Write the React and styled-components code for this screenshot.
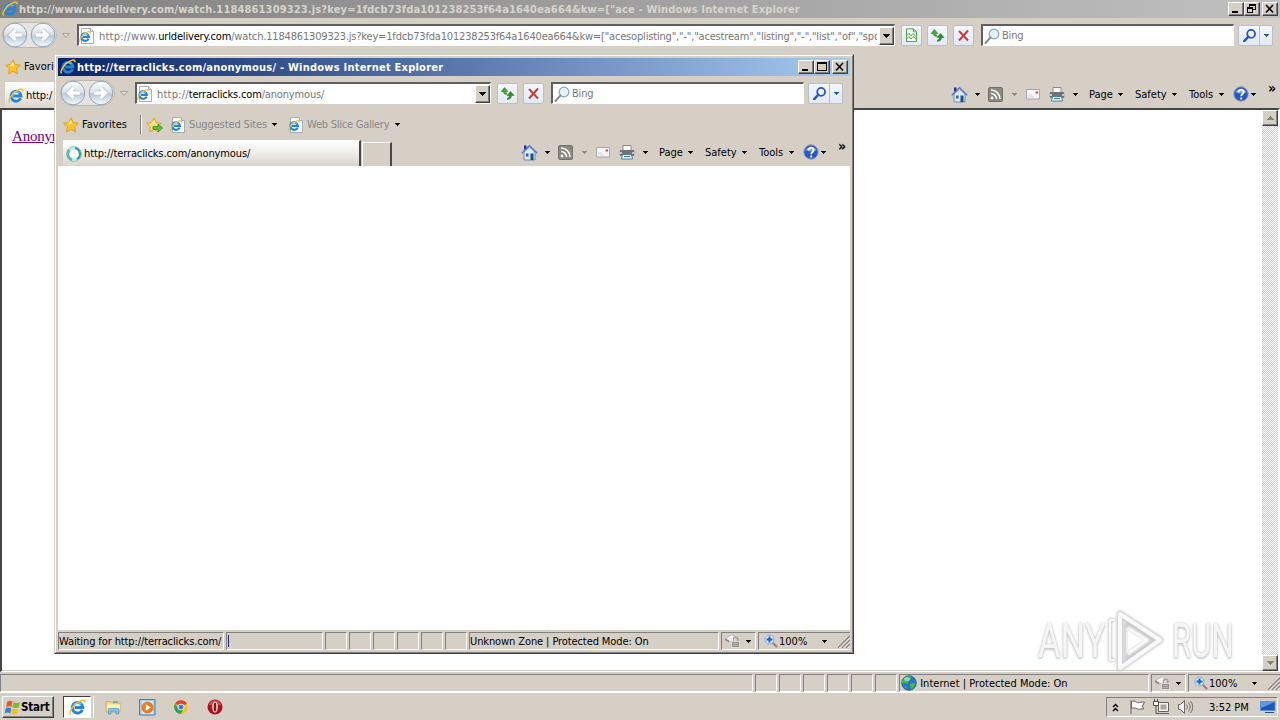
import React from "react";
import styled, { createGlobalStyle, css } from "styled-components";

const FACE = "#d5cfc6";
const ui = `"DejaVu Sans Condensed", "DejaVu Sans", sans-serif`;

const Global = createGlobalStyle`
  * { box-sizing: border-box; }
  body { margin: 0; overflow: hidden; }
  svg { display: block; flex: none; }
`;

const Desktop = styled.div`
  position: relative;
  width: 1280px;
  height: 720px;
  overflow: hidden;
  display: flex;
  flex-direction: column;
  background: ${FACE};
  font: 11px/14px ${ui};
  color: #000;
`;
const Label = styled.span`
  white-space: pre;
  padding-top: 1px;
  letter-spacing: ${(p) => p.$ls || 0}px;
  color: ${(p) => p.$color || "inherit"};
`;

/* ---------- windows ---------- */
const MainWindow = styled.section`
  height: 692px;
  display: flex;
  flex-direction: column;
`;
const PopupWindow = styled.section`
  position: absolute;
  left: 54px;
  top: 54px;
  width: 800px;
  height: 600px;
  background: ${FACE};
  border: 1px solid;
  border-color: ${FACE} #404040 #404040 ${FACE};
`;
const PopupInner = styled.div`
  height: 100%;
  padding: 2px 2px 0;
  border: 1px solid;
  border-color: #fff #808080 #808080 #fff;
  display: flex;
  flex-direction: column;
`;
const TitleBar = styled.header`
  height: 18px;
  flex: none;
  display: flex;
  align-items: center;
  padding: 0 2px;
  font-weight: bold;
  color: ${(p) => (p.$active ? "#fff" : "#d8d4cc")};
  background: ${(p) =>
    p.$active
      ? "linear-gradient(90deg,#0a246a,#a6caf0)"
      : "linear-gradient(90deg,#808080,#c0c0c0)"};
`;
const TitleText = styled(Label)`
  flex: 1;
  padding-left: 1px;
`;
const Caption = styled.button`
  width: 16px;
  height: 14px;
  padding: 0;
  margin-left: ${(p) => (p.$gap ? 2 : 0)}px;
  background: ${FACE};
  border: 1px solid;
  border-color: #fff #404040 #404040 #fff;
  box-shadow: inset -1px -1px #808080;
`;

const AddressRow = styled.div`
  height: 36px;
  flex: none;
  display: flex;
  align-items: center;
  padding: 0 7px 2px 2px;
`;
const NavWell = styled.div`
  display: flex;
  width: 57px;
  margin-right: 3px;
`;
const Field = styled.div`
  height: 22px;
  display: flex;
  align-items: center;
  background: #fff;
  border: 2px solid;
  border-color: #606060 #fff #fff #606060;
  border-width: 2px 1px 1px 2px;
  color: #777;
  overflow: hidden;
`;
const AddressField = styled(Field)`
  flex: 1;
  min-width: 0;
  margin-left: 8px;
`;
const UrlText = styled(Label)`
  flex: 1;
  min-width: 0;
  overflow: hidden;
  margin: 0 2px 0 4px;
  padding-top: 2px;
  b { font-weight: normal; color: #000; }
`;
const Scheme = styled.span`
  letter-spacing: ${(p) => p.$ls}px;
`;
const DropButton = styled.button`
  width: 15px;
  height: 18px;
  padding: 0;
  display: grid;
  place-items: center;
  background: ${FACE};
  border: 1px solid;
  border-color: #fff #404040 #404040 #fff;
  box-shadow: inset -1px -1px #808080;
`;
const SearchField = styled(Field)`
  width: 253px;
  margin-left: 7px;
  padding-left: 1px;
  gap: 2px;
`;
const ToolButton = styled.button`
  width: ${(p) => p.$w || 21}px;
  height: 21px;
  padding: 0;
  margin-left: ${(p) => p.$ml ?? 5}px;
  display: flex;
  align-items: center;
  justify-content: space-evenly;
  background: linear-gradient(#f4f7fb, #e3e9f2);
  border: 1px solid #b9bfc9;
  border-radius: 2px;
`;
const Divider = styled.i`
  width: 1px;
  height: 19px;
  background: #b9bfc9;
`;

const Row = styled.div`
  display: flex;
  flex: none;
  align-items: center;
`;
const FavoritesRow = styled(Row)`
  height: 24px;
  padding-left: 5px;
  padding-top: 1px;
`;
const TabRow = styled(Row)`
  height: 30px;
  padding-left: 5px;
`;
const Slot = styled.div`
  width: ${(p) => p.$w}px;
  flex: none;
  display: flex;
  align-items: center;
`;
const Separator = styled.i`
  width: 2px;
  height: 19px;
  margin-right: 4px;
  border-left: 1px solid #808080;
  border-right: 1px solid #fff;
`;
const Tab = styled.div`
  align-self: flex-end;
  width: 298px;
  height: 26px;
  display: flex;
  align-items: center;
  gap: 2px;
  padding-left: 3px;
  background: linear-gradient(#fff, #f3f1ee 40%, #d9d4cc);
  border-top: 1px solid #fff;
  border-right: 2px solid #4a4744;
`;
const NewTab = styled.div`
  align-self: flex-end;
  width: 30px;
  height: 24px;
  margin-left: 1px;
  border-top: 1px solid #fff;
  border-left: 1px solid #fff;
  border-right: 2px solid #4a4744;
`;
const CommandBar = styled(Row)`
  margin-left: auto;
  padding-top: 2px;
`;
const Overflow = styled.span`
  width: 12px;
  font: bold 14px/12px ${ui};
  padding-bottom: 12px;
`;

/* ---------- content ---------- */
const MainContent = styled.main`
  flex: 1;
  display: flex;
  background: #fff;
  border: 2px solid;
  border-color: #454545 #fff #fff #454545;
  border-width: 2px 2px 1px 2px;
  box-shadow: inset 0 -1px #d0ccc5;
`;
const Page = styled.div`
  flex: 1;
  padding: 16px 10px;
`;
const Link = styled.a`
  font: 15px/20px "Liberation Serif", serif;
  letter-spacing: -0.2px;
  color: #800080;
  text-decoration: underline;
`;
const PopupContent = styled.main`
  flex: 1;
  background: #fff;
`;
const ScrollBar = styled.div`
  width: 16px;
  display: flex;
  flex-direction: column;
  justify-content: space-between;
  background: repeating-conic-gradient(#d5cfc6 0 25%, #fff 0 50%) 0 0 / 2px 2px;
`;
const ScrollButton = styled(DropButton)`
  width: 16px;
  height: 16px;
`;

/* ---------- status bar ---------- */
const StatusBar = styled.footer`
  height: ${(p) => p.$h}px;
  flex: none;
  display: flex;
  align-items: flex-start;
  gap: 2px;
  padding-top: 2px;
`;
const Pane = styled.div`
  height: 18px;
  ${(p) => (p.$w ? css`width: ${p.$w}px; flex: none;` : css`flex: 1; min-width: 0;`)}
  display: flex;
  align-items: center;
  border: 1px solid;
  border-color: #808080 #fff #fff #808080;
  padding-left: ${(p) => p.$pl || 0}px;
`;
const ZoomPane = styled(Pane)`
  border-right: 0;
`;
const Progress = styled.i`
  width: 1px;
  height: 12px;
  background: #23238c;
`;

/* ---------- taskbar ---------- */
const TaskBar = styled.nav`
  height: 28px;
  display: flex;
  align-items: center;
  padding: 1px 2px 0;
  border-top: 1px solid #fff;
`;
const StartButton = styled.button`
  width: 52px;
  height: 22px;
  padding: 0 0 0 1px;
  display: flex;
  align-items: center;
  gap: 0;
  font: bold 11.5px/14px ${ui};
  letter-spacing: -0.2px;
  background: ${FACE};
  border: 1px solid;
  border-color: #fff #404040 #404040 #fff;
  box-shadow: inset -1px -1px #808080;
`;
const TaskActive = styled.div`
  width: 28px;
  height: 22px;
  margin-left: 9px;
  display: grid;
  place-items: center;
  background: #fff;
  border: 1px solid;
  border-color: #404040 #fff #fff #404040;
  box-shadow: 2px 0 ${FACE}, 3px 0 #fff;
`;
const Launch = styled.div`
  width: 34px;
  display: grid;
  place-items: center;
`;
const Launchers = styled(Row)`
  flex: 1;
  padding-left: 5px;
`;
const Tray = styled.div`
  width: 172px;
  height: 20px;
  display: flex;
  align-items: center;
  border: 1px solid;
  border-color: #808080 #fff #fff #808080;
  padding-left: 5px;
`;

/* ---------- watermark ---------- */
const Watermark = styled.div`
  position: absolute;
  left: 1038px;
  top: 607px;
  width: 196px;
  height: 68px;
  display: flex;
  align-items: center;
  justify-content: space-between;
`;
const MarkWord = styled.span`
  width: 62px;
  font: 48px/60px Roboto, sans-serif;
  color: #f6f6f6;
  text-shadow: 0 0 3px #c4c4c4, 0 2px 3px #ccc, 0 0 1px #ddd;
  transform: scaleX(${(p) => p.$sx});
  transform-origin: 0 50%;
`;

/* ---------- icons ---------- */
const Arrow = ({ color = "#000" }) => (
  <svg width="5" height="3" shapeRendering="crispEdges"><path d="M0 0h5L2.5 3z" fill={color} /></svg>
);
const WideArrow = ({ color = "#000", up }) => (
  <svg width="7" height="4" shapeRendering="crispEdges">
    <path d={up ? "M0 4h7L3.5 0z" : "M0 0h7L3.5 4z"} fill={color} />
  </svg>
);
const IeGlyph = () => (
  <>
    <path d="M12.6 10.2A5 5 0 1 1 13 8H5.2" fill="none" stroke="#2584da" strokeWidth="2.8" />
    <path d="M4.5 6A4.300 4.300 0 0 1 11.500 5" fill="none" stroke="#6accf7" strokeWidth="1.4" />
    <path d="M1.600 14.600C-.6 12 4.500 4.300 11 1.600c3-1.200 4.400-.4 3.800 1.600" fill="none" stroke="#efc131" strokeWidth="1.500" />
  </>
);
const IeIcon = ({ size = 16 }) => (
  <svg width={size} height={size} viewBox="0 0 16 16"><IeGlyph /></svg>
);
const IePage = () => (
  <svg width="16" height="16" viewBox="0 0 16 16">
    <path d="M2.500.5h9l3 3v12h-12z" fill="#fff" stroke="#a8aeb8" />
    <path d="M11.500.5v3h3" fill="#dde6f2" stroke="#a8aeb8" />
    <g transform="translate(0 2.800) scale(.76)"><IeGlyph /></g>
  </svg>
);
const NavArrows = () => (
  <svg width="68" height="28" viewBox="0 0 68 28">
    <defs>
      <linearGradient id="nav" x2="0" y2="1">
        <stop offset="0" stopColor="#fff" />
        <stop offset=".45" stopColor="#dbe2e9" />
        <stop offset=".55" stopColor="#bccbda" />
        <stop offset="1" stopColor="#f4fbff" />
      </linearGradient>
    </defs>
    <rect x=".5" y="1.5" width="54" height="25" rx="12.5" fill="#e6e4e2" stroke="#bcb8b2" />
    {[13, 41].map((cx) => (
      <g key={cx}>
        <circle cx={cx} cy="14" r="11.800" fill="url(#nav)" stroke="#98a2af" />
        {[["#a3b1c4", 4.6], ["#fff", 3.4]].map(([stroke, w]) => (
          <path
            key={stroke}
            d={cx === 13 ? "M20 14H8.500m5-5L8.500 14l5 5" : "M34 14h11.500m-5-5L45.500 14l-5 5"}
            fill="none" stroke={stroke} strokeWidth={w}
          />
        ))}
      </g>
    ))}
    <path d="M60.500 12.500h7l-3.500 4z" fill="#e4e1dc" stroke="#a5a19b" />
  </svg>
);
const Star = ({ add }) => (
  <svg width="17" height="16" viewBox="0 0 17 16">
    <path d="M8 .8l2.200 4.800 5.200.6-3.900 3.500 1.100 5.200L8 12.300l-4.600 2.600 1.100-5.200L.6 6.200l5.200-.6z" fill={add ? "#fbe37c" : "#fcc52c"} stroke="#e39c25" />
    <path d="M8 3l1.300 3.400-4.800.6z" fill="#fff3b0" />
    {add && <path d="M7 9.500h5V7l4.500 4-4.500 4v-2.500H7z" fill="#5fc23c" stroke="#2e8b21" strokeWidth=".8" />}
  </svg>
);
const Refresh = () => (
  <svg width="15" height="15" viewBox="0 0 15 15">
    <path d="M4.500 1.500L1 5.500h2.300c0 2 1.400 3 3.200 3V6.800C5.700 6.800 5.500 6.300 5.500 5.500H8z" fill="#3fa83a" stroke="#237f25" strokeWidth=".5" />
    <path d="M10.500 5.500L7 9.500h2.300c0 1.500-.5 2-1.800 2.500v1.500c2.800-.3 4-1.800 4-4H14z" fill="#2c8f2a" stroke="#1c7320" strokeWidth=".5" />
  </svg>
);
const Stop = () => (
  <svg width="13" height="13" viewBox="0 0 13 13">
    <path d="M2 2l9 9.500M11 1.500L2 11.500" stroke="#cf3a3f" strokeWidth="2" fill="none" />
  </svg>
);
const Compat = () => (
  <svg width="13" height="14" viewBox="0 0 13 14">
    <path d="M1.500.8h7l3 3v9.700h-10z" fill="#f6fff4" stroke="#52a64e" />
    <path d="M8.500.8v3h3M1.500 8l2.500-2.500L6 8l2-2.500 3 3M1.500 11l2.500-2.500L6 11l2-2.500 3 2.500" fill="none" stroke="#52a64e" />
  </svg>
);
const Glass = ({ dark }) => (
  <svg width={dark ? 13 : 16} height={dark ? 13 : 16} viewBox="0 0 16 16">
    <circle cx="10" cy="6" r="4.800" fill={dark ? "#f5f9ff" : "#e3f2fb"} stroke={dark ? "#1f57c8" : "#8aa3b8"} strokeWidth={dark ? 2.2 : 1.2} />
    <path d="M6.500 9.500L1.500 15" stroke={dark ? "#1f57c8" : "#8d8d93"} strokeWidth={dark ? 3 : 2} strokeLinecap="round" />
  </svg>
);
const Home = () => (
  <svg width="17" height="17" viewBox="0 0 17 17">
    <path d="M3 8v8h11V8L8.500 3z" fill="#d9e8f6" stroke="#5a78ab" strokeWidth=".8" />
    <path d="M3 1.500h2.500v4H3z" fill="#1d2d9a" />
    <path d="M.8 9.300L8.500 1.600l7.700 7.700" fill="none" stroke="#5d70bd" strokeWidth="1.300" />
    <path d="M9.500 9.500h3V16h-3z" fill="#1e4f80" /><path d="M5 9.500h2.500v3H5z" fill="#2c6591" />
  </svg>
);
const Rss = () => (
  <svg width="15" height="15" viewBox="0 0 15 15">
    <rect x=".5" y=".5" width="14" height="14" rx="1.500" fill="#8b8984" stroke="#74716d" />
    <circle cx="4" cy="11" r="1.400" fill="#fff" />
    <path d="M3 6.500a5.500 5.500 0 0 1 5.500 5.500M3 3a9 9 0 0 1 9 9" fill="none" stroke="#fff" strokeWidth="1.500" />
  </svg>
);
const Mail = () => (
  <svg width="14" height="11" viewBox="0 0 14 11">
    <path d="M.5.500h13v9.500H.500z" fill="#f7f5f7" stroke="#aaa5a8" />
    <path d="M2 6h4M2 8h6" stroke="#d5d2dc" /><path d="M9.500 2.500h2.500v2H9.500z" fill="#dc4a3d" />
  </svg>
);
const Printer = () => (
  <svg width="16" height="16" viewBox="0 0 16 16">
    <path d="M4 1.500h8V7H4z" fill="#fff" stroke="#8b8b8b" />
    <rect x=".8" y="6" width="14.400" height="6" rx="1" fill="#707278" />
    <path d="M1 8h2v2H1zM13 8h2v2h-2z" fill="#c5c8ce" />
    <path d="M3.500 10.500h9l1 4.500h-11z" fill="#f0f7fb" stroke="#557a92" /><path d="M5 12.500h6" stroke="#2d7ca8" />
  </svg>
);
const Help = () => (
  <svg width="16" height="16" viewBox="0 0 16 16">
    <circle cx="8" cy="8" r="7.200" fill="#2956c3" stroke="#8d9cc2" />
    <path d="M2.500 6a6 5 0 0 1 11 0q-5 3-11 0z" fill="#84a6ea" />
    <path d="M5.600 6.200c0-3.400 5-3.200 5 0C10.600 8 8.200 8 8.200 10.200M8.200 11.400v2" fill="none" stroke="#fff" strokeWidth="1.800" />
  </svg>
);
const Spinner = () => (
  <svg width="16" height="16" viewBox="0 0 16 16">
    <circle cx="8" cy="8" r="6" fill="#fff" stroke="#c4e9e4" strokeWidth="3" />
    <path d="M3.500 3.800A6 6 0 0 0 6 13.700" fill="none" stroke="#57bab4" strokeWidth="2.600" />
    <path d="M9 2.100A6 6 0 0 1 11 13.200" fill="none" stroke="#2a9f9c" strokeWidth="2" />
    <circle cx="8" cy="8" r="7.500" fill="none" stroke="#7fa9a8" strokeWidth=".6" />
  </svg>
);
const Privacy = () => (
  <svg width="17" height="16" viewBox="0 0 17 16">
    <path d="M1 6l7-4.500 4 3V9L4 8z" fill="#f2f2f2" stroke="#b5b2ae" strokeWidth=".8" />
    <path d="M1 6l4 2.500" stroke="#888" strokeWidth="1.500" />
    <path d="M9.500 9V6.500a2.200 2.200 0 0 1 4.400 0V9" fill="none" stroke="#a5a29e" strokeWidth="1.500" />
    <path d="M7.500 8.500h8v6h-8z" fill="#93918d" stroke="#fff" strokeWidth=".6" />
    <path d="M9 10.500h5M9 12.500h5" stroke="#ccc" strokeWidth=".7" />
  </svg>
);
const ZoomIcon = () => (
  <svg width="14" height="14" viewBox="0 0 14 14">
    <path d="M8.500 8.500l4 4" stroke="#9a8672" strokeWidth="2.200" strokeLinecap="round" />
    <circle cx="5.500" cy="5.500" r="4.500" fill="#d9ecfb" stroke="#87a9d1" />
    <path d="M5.500 2.500v6M2.500 5.500h6" stroke="#1862c4" strokeWidth="2" />
  </svg>
);
const Grip = () => (
  <svg width="12" height="14" viewBox="0 0 12 14">
    <path d="M0 14L12 2M4 14l8-8M8 14l4-4" stroke="#85817b" strokeWidth="1.500" />
    <path d="M1.500 14L12 3.500M5.500 14L12 7.500M9.500 14L12 11.500" stroke="#fff" strokeWidth=".8" />
  </svg>
);
const Globe = () => (
  <svg width="16" height="16" viewBox="0 0 16 16">
    <circle cx="8" cy="8" r="7.300" fill="#2575c6" stroke="#245d93" strokeWidth=".8" />
    <path d="M3 3.500C6 0 10 1 10.500 3L8 5.500 6.500 9 3 7.500 1 9V6zM9 9l4-1.500 1.500 1.500-3 5-2-1zM3 11l3 1-.5 2z" fill="#46b74a" />
    <ellipse cx="6" cy="4" rx="3" ry="2" fill="#cfe9fa" opacity=".6" />
  </svg>
);
const Flag = () => (
  <svg width="18" height="16" viewBox="0 0 18 16">
    <path d="M2 1.500v13.500M2.500 2.500c4-2 5 2.500 8 1 2-.5 3.500-.5 5-.3L13.500 7l1 3c-4-.5-5 1-7-.5-2-1-3.500-.5-5 0z" fill="#fff" stroke="#65625e" />
  </svg>
);
const Network = () => (
  <svg width="17" height="16" viewBox="0 0 17 16">
    <path d="M5.500 3.500h10v9h-10z" fill="#f4f3f1" stroke="#65625e" /><path d="M7.500 5.500h6v5h-6z" fill="#aaa7a2" />
    <path d="M5 14.500h11" stroke="#65625e" /><path d="M.5 2.500h5v4h-5z" fill="#fff" stroke="#55524e" />
    <path d="M1.500 0v2.500M4.500 0v2.500M3 6.500v8h3" fill="none" stroke="#55524e" />
  </svg>
);
const Volume = () => (
  <svg width="17" height="16" viewBox="0 0 17 16">
    <path d="M1.500 5.500h2L7.500 1.500v13L3.500 10.500h-2z" fill="#fff" stroke="#6d6a66" />
    <path d="M9.500 5.500q2 2.500 0 5M11.500 3.500q3.500 4.500 0 9M13.500 2q4.500 6 0 12" fill="none" stroke="#77746f" />
  </svg>
);
const DesktopIcon = () => (
  <svg width="16" height="14" viewBox="0 0 16 14">
    <path d="M.5 1.500h14.500v9H.500z" fill="#1d58b8" stroke="#5b93dc" /><path d="M1 2h14L1 8z" fill="#5e98e2" />
    <path d="M5 12.500h9" stroke="#334c74" />
  </svg>
);
const WinFlag = () => (
  <svg width="17" height="17" viewBox="0 0 16 16">
    <path d="M3 2.500Q5.500.8 8 2.500L7 7.500Q4.500 6 2 7.500z" fill="#ea5b22" />
    <path d="M9 3q2.500 1.500 6 0l-1.300 5Q11 9 8 7.700z" fill="#7fbc2c" />
    <path d="M1.800 8.500Q4 7.200 6.800 8.700l-1 5Q3.500 12 .6 13.500z" fill="#2a83cf" />
    <path d="M7.800 9q2.700 1.300 5.800.2l-1.300 5q-2.600 1-5.600-.3z" fill="#fbc016" />
  </svg>
);
const Explorer = () => (
  <svg width="17" height="16" viewBox="0 0 17 16">
    <path d="M1 2.500h5l1.500 1.500H15v9H1z" fill="#f2d982" stroke="#c8a94b" strokeWidth=".8" />
    <path d="M2 5.500h13v5H2z" fill="#fbf1b9" /><path d="M8 3h5" stroke="#66b06b" strokeWidth="1.500" />
    <path d="M3.500 15V9.500h10V15H11v-3H6v3z" fill="#8cc6e8" stroke="#4c94c2" strokeWidth=".7" />
  </svg>
);
const Player = () => (
  <svg width="17" height="17" viewBox="0 0 17 17">
    <path d="M.5.500h15.500v15.500H.500z" fill="#a7cdee" stroke="#3f82c0" /><path d="M3 2h11v13H3z" fill="#d8eaf8" />
    <circle cx="8.500" cy="8.500" r="5.600" fill="#ef7f17" stroke="#d0640b" strokeWidth=".6" />
    <path d="M6.800 5.300l5 3.200-5 3.200z" fill="#fff" />
  </svg>
);
const Chrome = () => (
  <svg width="14" height="14" viewBox="0 0 14 14">
    <circle cx="7" cy="7" r="6.800" fill="#f5c61c" />
    <path d="M7 7L1.100 3.600A6.800 6.800 0 0 1 12.900 3.600z" fill="#dc4334" /><path d="M1.100 3.600A6.800 6.800 0 0 0 7 13.800L9.800 8.500 4 8.500z" fill="#2fa351" />
    <circle cx="7" cy="7" r="3.300" fill="#fff" /><circle cx="7" cy="7" r="2.500" fill="#3b7ce6" />
  </svg>
);
const Opera = () => (
  <svg width="16" height="16" viewBox="0 0 16 16">
    <circle cx="8" cy="8" r="7.500" fill="#b01218" /><path d="M2 6a6.200 6.200 0 0 1 12 0z" fill="#d8474a" />
    <ellipse cx="8" cy="8" rx="2.800" ry="5.600" fill="#f6e5e3" /><ellipse cx="8" cy="8" rx="1.300" ry="4.600" fill="#980c13" />
  </svg>
);
const MarkLogo = () => (
  <svg width="60" height="64" viewBox="0 0 60 64">
    <defs>
      <filter id="soft" x="-10%" y="-10%" width="120%" height="120%"><feGaussianBlur stdDeviation="1.2" /></filter>
    </defs>
    <g fill="none" strokeLinejoin="round">
      <g stroke="#cbcbcb" filter="url(#soft)">
        <path d="M14 5v54l40-28z" strokeWidth="7" /><path d="M9 11H4v40h5" strokeWidth="4" /><path d="M20 14v36l27-19z" strokeWidth="3" />
      </g>
      <g stroke="#fafafa">
        <path d="M14 5v54l40-28z" strokeWidth="4" /><path d="M9 11H4v40h5" strokeWidth="2" />
      </g>
      <path d="M21 20v23l17-12z" fill="#fff" stroke="#efefef" strokeWidth="2" />
    </g>
  </svg>
);

/* ---------- composed parts ---------- */
function Captions({ maximized }) {
  return (
    <>
      <Caption><svg width="14" height="12" shapeRendering="crispEdges"><path d="M3 8h6v2H3z" /></svg></Caption>
      <Caption>
        <svg width="14" height="12" shapeRendering="crispEdges">
          {maximized ? (
            <path d="M4.500 4V1.500h6v5H8M4 2h7M2.500 4.500h5v5h-5zM2 5h6" fill="none" stroke="#000" />
          ) : (
            <path d="M2.500 1.500h9v8h-9zM2 2.500h9" fill="none" stroke="#000" />
          )}
        </svg>
      </Caption>
      <Caption $gap>
        <svg width="14" height="12"><path d="M3 2l7 7.500M10 2L3 9.500" stroke="#000" strokeWidth="1.600" /></svg>
      </Caption>
    </>
  );
}

const commands = [["Page", 29, 17], ["Safety", 37, 17], ["Tools", 30, 14]];

function BrowserBars({ active, title, titleLs, url, tab, tabIcon, compat }) {
  return (
    <>
      <TitleBar $active={active}>
        <IeIcon />
        <TitleText $ls={titleLs}>{title}</TitleText>
        <Captions maximized={!active} />
      </TitleBar>
      <AddressRow>
        <NavWell><NavArrows /></NavWell>
        <Slot $w={7} />
        <AddressField>
          <IePage />
          {url}
          <DropButton><WideArrow /></DropButton>
        </AddressField>
        {compat && <ToolButton $ml={6}><Compat /></ToolButton>}
        <ToolButton $ml={compat ? 5 : 6}><Refresh /></ToolButton>
        <ToolButton><Stop /></ToolButton>
        <SearchField><Glass /><Label $ls={-0.2}>Bing</Label></SearchField>
        <ToolButton $w={35} $ml={4}><Glass dark /><Divider /><Arrow color="#2456a8" /></ToolButton>
      </AddressRow>
      <FavoritesRow>
        <Slot $w={19}><Star /></Slot>
        <Slot $w={58}><Label $ls={0.05}>Favorites</Label></Slot>
        <Separator />
        {active && (
          <>
            <Slot $w={24}><Star add /></Slot>
            <Slot $w={19}><IePage /></Slot>
            <Slot $w={83}><Label $ls={-0.12} $color="#888">Suggested Sites</Label></Slot>
            <Slot $w={16}><Arrow /></Slot>
            <Slot $w={19}><IePage /></Slot>
            <Slot $w={88}><Label $ls={-0.24} $color="#888">Web Slice Gallery</Label></Slot>
            <Arrow />
          </>
        )}
      </FavoritesRow>
      <TabRow>
        <Tab>{tabIcon}<Label $ls={-0.12}>{tab}</Label></Tab>
        <NewTab />
        <CommandBar>
          <Slot $w={24}><Home /></Slot>
          <Slot $w={13}><Arrow /></Slot>
          <Slot $w={24}><Rss /></Slot>
          <Slot $w={14}><Arrow color="#8d8983" /></Slot>
          <Slot $w={23}><Mail /></Slot>
          <Slot $w={24}><Printer /></Slot>
          <Slot $w={16}><Arrow /></Slot>
          {commands.map(([name, w, gap]) => (
            <React.Fragment key={name}>
              <Slot $w={w}><Label>{name}</Label></Slot>
              <Slot $w={gap}><Arrow /></Slot>
            </React.Fragment>
          ))}
          <Slot $w={18}><Help /></Slot>
          <Slot $w={17}><Arrow /></Slot>
          <Overflow>»</Overflow>
        </CommandBar>
      </TabRow>
    </>
  );
}

function StatusPanes({ zone, icon, ls }) {
  return (
    <>
      {[0, 1, 2, 3, 4, 5].map((i) => <Pane key={i} $w={22} />)}
      <Pane $w={250} $pl={icon ? 1 : 0}>
        {icon}
        <Label $ls={ls}>{icon ? " " : ""}{zone}</Label>
      </Pane>
      <Pane $w={35} $pl={2}><Slot $w={22}><Privacy /></Slot><Arrow /></Pane>
      <ZoomPane $w={92} $pl={5}>
        <Slot $w={15}><ZoomIcon /></Slot>
        <Slot $w={43}><Label>100%</Label></Slot>
        <Slot $w={16}><Arrow /></Slot>
        <Grip />
      </ZoomPane>
    </>
  );
}

export default function App() {
  return (
    <Desktop>
      <Global />
      <MainWindow>
        <BrowserBars
          compat
          titleLs={0.155}
          title={'http://www.urldelivery.com/watch.1184861309323.js?key=1fdcb73fda101238253f64a1640ea664&kw=["ace - Windows Internet Explorer'}
          url={
            <UrlText $ls={-0.175}>
              <Scheme $ls={0.23}>http://www.</Scheme><b>urldelivery.com</b>
              {'/watch.1184861309323.js?key=1fdcb73fda101238253f64a1640ea664&kw=["acesoplisting","-","acestream","listing","-","list","of","spo'}
            </UrlText>
          }
          tab="http:/"
          tabIcon={<IeIcon />}
        />
        <MainContent>
          <Page><Link>Anonymous</Link></Page>
          <ScrollBar>
            <ScrollButton><WideArrow up color="#85817b" /></ScrollButton>
            <ScrollButton><WideArrow color="#85817b" /></ScrollButton>
          </ScrollBar>
        </MainContent>
        <StatusBar $h={20}>
          <Pane />
          <StatusPanes zone="Internet | Protected Mode: On" icon={<Globe />} ls={0.02} />
        </StatusBar>
      </MainWindow>

      <TaskBar>
        <StartButton><WinFlag />Start</StartButton>
        <TaskActive><IeIcon size={17} /></TaskActive>
        <Launchers>
          <Launch><Explorer /></Launch>
          <Launch><Player /></Launch>
          <Launch><Chrome /></Launch>
          <Launch><Opera /></Launch>
        </Launchers>
        <Tray>
          <Slot $w={17}>
            <svg width="7" height="9"><path d="M1 4l2.500-2.500L6 4M1 8l2.500-2.500L6 8" fill="none" stroke="#000" strokeWidth="1.500" /></svg>
          </Slot>
          <Slot $w={24}><Flag /></Slot>
          <Slot $w={24}><Network /></Slot>
          <Slot $w={32}><Volume /></Slot>
          <Slot $w={51}><Label>3:52 PM</Label></Slot>
          <DesktopIcon />
        </Tray>
      </TaskBar>

      <PopupWindow>
        <PopupInner>
          <BrowserBars
            active
            titleLs={0.23}
            title="http://terraclicks.com/anonymous/ - Windows Internet Explorer"
            url={<UrlText $ls={-0.17}><Scheme $ls={0.2}>http://</Scheme><b>terraclicks.com</b>/anonymous/</UrlText>}
            tab="http://terraclicks.com/anonymous/"
            tabIcon={<Spinner />}
          />
          <PopupContent />
          <StatusBar $h={22}>
            <Pane $w={166}><Label $ls={-0.11}>Waiting for http://terraclicks.com/</Label></Pane>
            <Pane $pl={1}><Progress /></Pane>
            <StatusPanes zone="Unknown Zone | Protected Mode: On" ls={-0.1} />
          </StatusBar>
        </PopupInner>
      </PopupWindow>

      <Watermark>
        <MarkWord $sx={0.72}>ANY</MarkWord>
        <MarkLogo />
        <MarkWord $sx={0.65}>RUN</MarkWord>
      </Watermark>
    </Desktop>
  );
}
